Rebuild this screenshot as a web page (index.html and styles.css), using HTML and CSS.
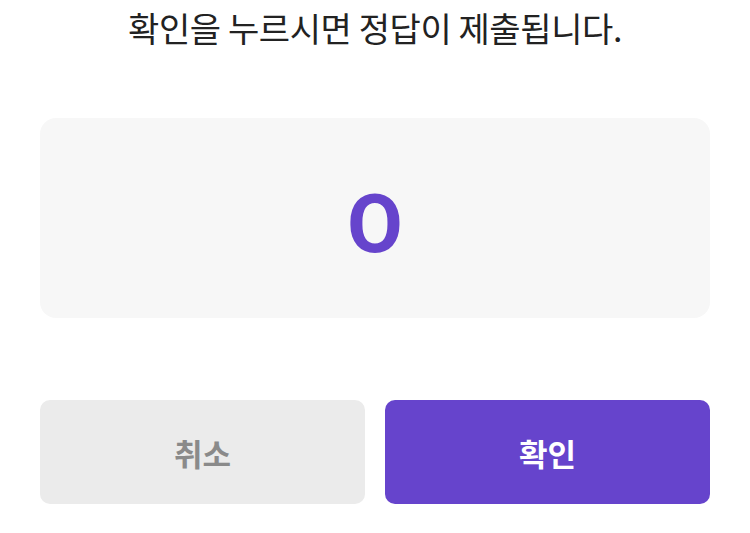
FILE: index.html
```html
<!DOCTYPE html>
<html>
    <head>
        <meta charset="utf-8">
        <title>정답 제출</title>
        <link rel="stylesheet" href="styles.css">
    </head>
    <body>
        <div class = "dialog">
            <p class = "dialog_title">확인을 누르시면 정답이 제출됩니다.</p>
            <div class = "answer_box">
                <span class = "answer">O</span>
            </div>
            <div class = "button_row">
                <button class = "btn btn_cancel">취소</button>
                <button class = "btn btn_ok">확인</button>
            </div>
        </div>
    </body>
</html>
```

FILE: styles.css
```css
html, body {
    margin: 0;      padding: 0;
    background-color: #FFFFFF;
    font-family: "Noto Sans CJK KR", "Noto Sans", sans-serif;

    --accent: #6644CC;
}

.dialog {
    padding: 0 40px;
}

.dialog_title {
    margin: 0;
    padding-top: 4px;
    height: 52px;
    line-height: 48px;
    text-align: center;
    font-size: 34px;
    color: #222222;
    letter-spacing: -0.4px;
}

/* Answer box */
.answer_box {
    display: flex;
    align-items: center;
    justify-content: center;
    margin-top: 62px;
    height: 200px;
    background-color: #F7F7F7;
    border-radius: 16px;
}
.answer {
    font-family: Roboto, "Noto Sans", sans-serif;
    font-weight: bold;
    font-size: 81px;
    color: var(--accent);
    line-height: 1;
    padding-top: 12px;
}

/* Buttons */
.button_row {
    display: flex;
    gap: 20px;
    margin-top: 82px;
}
.btn {
    flex: 1;
    height: 104px;
    border: none;   outline: none;
    border-radius: 10px;
    font-family: "Noto Sans CJK KR", sans-serif;
    font-weight: bold;
    font-size: 31px;
    cursor: pointer;
}
.btn_cancel {
    background-color: #EBEBEB;
    color: #8A8A8A;
}
.btn_ok {
    background-color: var(--accent);
    color: #FFFFFF;
}
```
